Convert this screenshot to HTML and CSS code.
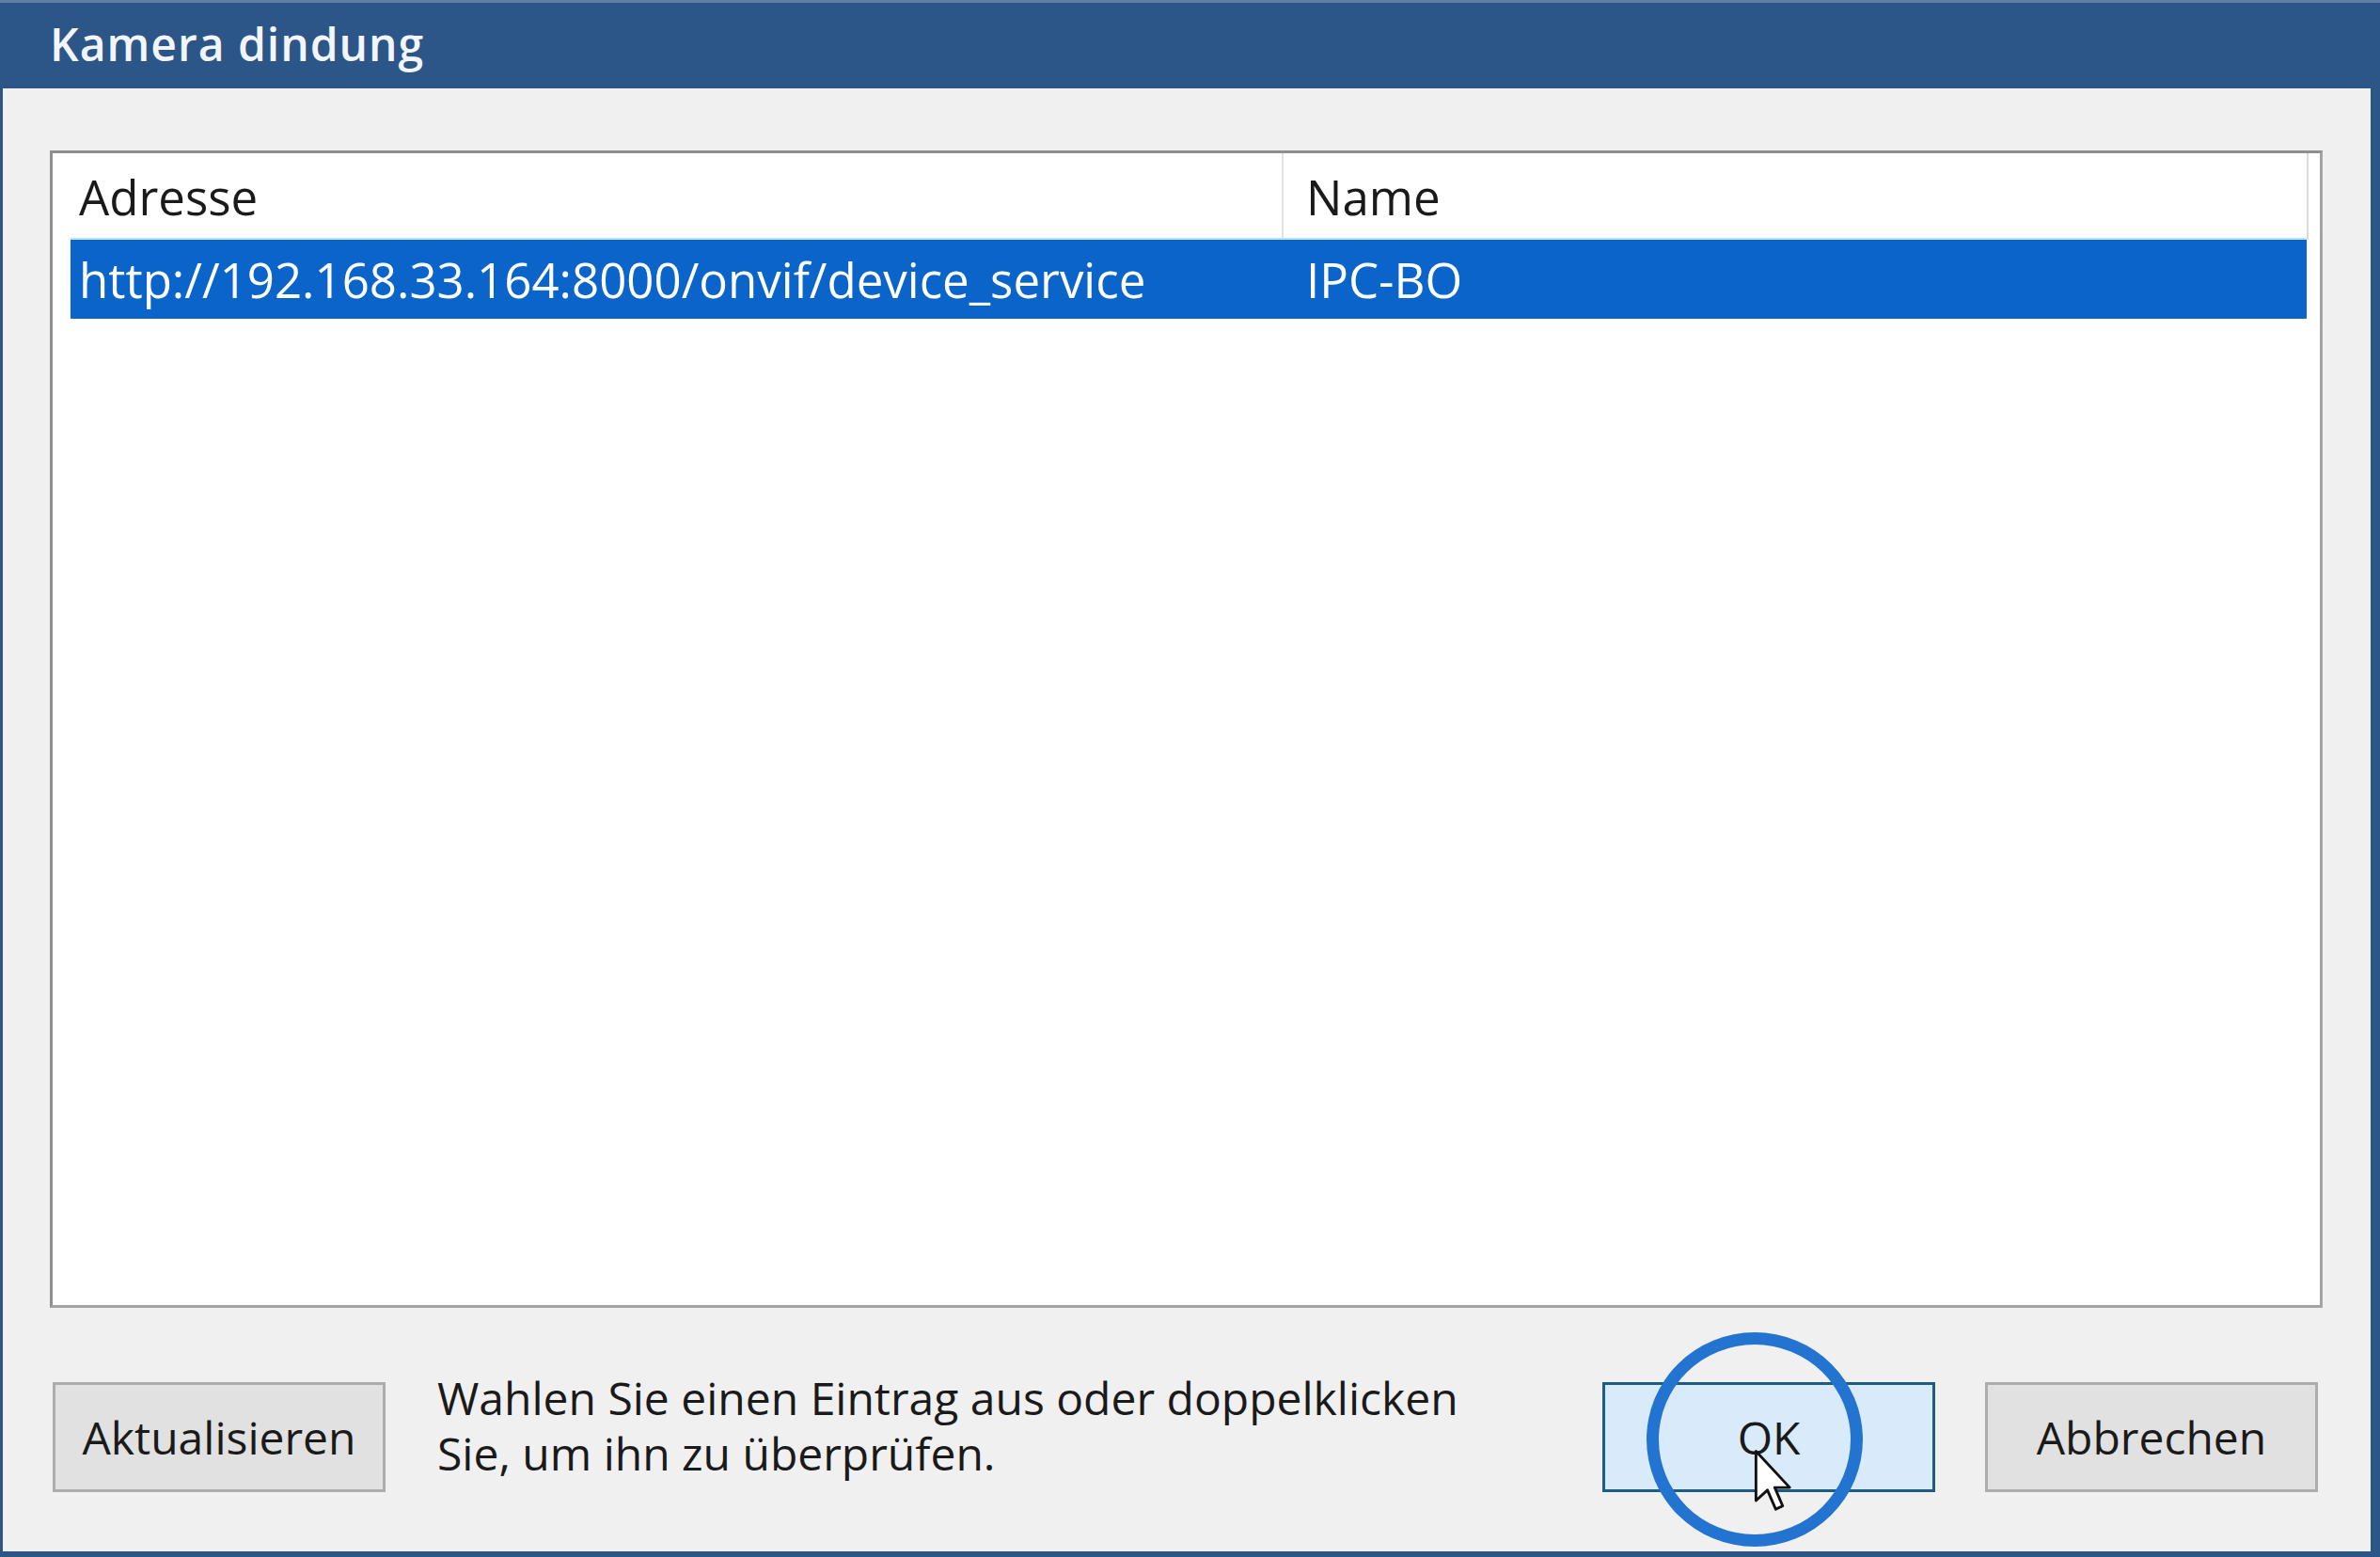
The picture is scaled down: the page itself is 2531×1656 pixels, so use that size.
FILE: index.html
```html
<!DOCTYPE html>
<html lang="de">
<head>
<meta charset="utf-8">
<title>Kamera dindung</title>
<link rel="stylesheet" href="styles.css">
</head>
<body>
<div class="window">
  <div class="titlebar">Kamera dindung</div>
  <div class="content">
    <div class="listbox">
      <div class="list-inner">
        <div class="header">
          <div class="col col-addr">Adresse</div>
          <div class="col col-name">Name</div>
        </div>
        <div class="row selected">
          <div class="col col-addr">http://192.168.33.164:8000/onvif/device_service</div>
          <div class="col col-name">IPC-BO</div>
        </div>
      </div>
    </div>
    <div class="footer">
      <button class="btn">Aktualisieren</button>
      <div class="hint">Wahlen Sie einen Eintrag aus oder doppelklicken<br>Sie, um ihn zu überprüfen.</div>
      <div class="ok-wrap">
        <button class="btn btn-ok">OK</button>
        <div class="ring"></div>
        <svg class="cursor" width="44" height="68" viewBox="0 0 13 20">
          <path d="M1 1 L1 16.5 L4.6 13.2 L7.2 19.2 L9.4 18.2 L6.9 12.4 L11.6 12.4 Z" fill="#ffffff" stroke="#111111" stroke-width="0.85" stroke-linejoin="round"/>
        </svg>
      </div>
      <button class="btn btn-cancel">Abbrechen</button>
    </div>
  </div>
</div>
</body>
</html>
```

FILE: styles.css
```css
html, body {
  margin: 0;
  padding: 0;
}
body {
  width: 2531px;
  height: 1656px;
  overflow: hidden;
  background: #2d5688;
  font-family: "Open Sans", "Noto Sans", sans-serif;
}
.window {
  width: 2531px;
  height: 1656px;
  box-sizing: border-box;
  display: flex;
  flex-direction: column;
  background: #2d5688;
  border-top: 3px solid #5f7fa6;
  padding: 0 10px 6px 3px;
}
.titlebar {
  height: 91px;
  flex: none;
  display: flex;
  align-items: center;
  padding-left: 50px;
  padding-bottom: 4px;
  box-sizing: border-box;
  color: #f2f5fa;
  font-weight: 600;
  font-size: 48px;
  letter-spacing: 1px;
}
.content {
  flex: 1;
  background: #f0f0f0;
  padding: 66px 51px 0 50px;
  display: flex;
  flex-direction: column;
}
.listbox {
  height: 1231px;
  box-sizing: border-box;
  background: #ffffff;
  border: 3px solid #a3a3a3;
  border-top-color: #8f8f8f;
  border-left-color: #8f8f8f;
  padding: 0 12px 0 19px;
}
.list-inner {
  display: flex;
  flex-direction: column;
  border-right: 2px solid #dcdcdc;
  height: 92px;
}
.header, .row {
  display: flex;
  font-size: 51px;
  color: #1a1a1a;
}
.header {
  height: 92px;
  align-items: center;
  flex: none;
}
.header .col {
  height: 92px;
  display: flex;
  align-items: center;
}
.header .col-addr {
  border-right: 2px solid #e2e2e2;
}
.col-addr {
  width: 1290px;
  box-sizing: border-box;
  padding-left: 9px;
  flex: none;
}
.col-name {
  flex: 1;
  padding-left: 24px;
}
.row {
  height: 84px;
  align-items: center;
  flex: none;
}
.row.selected {
  background: #0a64c9;
  color: #ffffff;
  box-shadow: 0 -2px 0 #bfe3f6;
}
.footer {
  display: flex;
  align-items: flex-start;
  padding-top: 79px;
  padding-left: 3px;
}
.btn {
  width: 354px;
  height: 117px;
  box-sizing: border-box;
  background: #e1e1e1;
  border: 3px solid #adadad;
  font-family: "Open Sans", "Noto Sans", sans-serif;
  font-size: 48px;
  color: #1a1a1a;
  padding: 0;
  margin: 0;
  flex: none;
}
.hint {
  flex: 1;
  margin-left: 55px;
  margin-top: -13px;
  font-size: 48px;
  line-height: 59px;
  color: #1a1a1a;
}
.ok-wrap {
  position: relative;
  flex: none;
}
.btn-ok {
  display: block;
  background: #d9ebfa;
  border-color: #1d5d82;
}
.btn-cancel {
  margin-left: 53px;
  margin-right: 5px;
}
.ring {
  position: absolute;
  left: 47px;
  top: -53px;
  width: 230px;
  height: 228px;
  box-sizing: border-box;
  border: 13px solid #2374d1;
  border-radius: 50%;
}
.cursor {
  position: absolute;
  left: 160px;
  top: 70px;
}
```
